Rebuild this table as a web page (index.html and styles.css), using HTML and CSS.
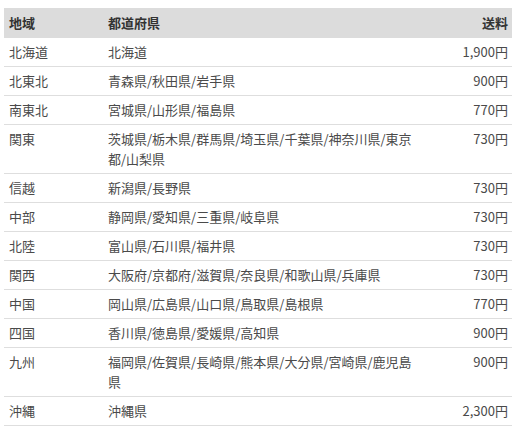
FILE: index.html
```html
<!DOCTYPE html>
<html lang="ja">
<head>
<meta charset="utf-8">
<link rel="stylesheet" href="styles.css">
</head>
<body>
<table class="fee-table">
  <colgroup>
    <col class="c-region">
    <col class="c-pref">
    <col class="c-fee">
  </colgroup>
  <thead>
    <tr><th>地域</th><th>都道府県</th><th class="num">送料</th></tr>
  </thead>
  <tbody>
    <tr><td>北海道</td><td>北海道</td><td class="num">1,900円</td></tr>
    <tr><td>北東北</td><td>青森県/秋田県/岩手県</td><td class="num">900円</td></tr>
    <tr><td>南東北</td><td>宮城県/山形県/福島県</td><td class="num">770円</td></tr>
    <tr><td>関東</td><td>茨城県/栃木県/群馬県/埼玉県/千葉県/神奈川県/東京都/山梨県</td><td class="num">730円</td></tr>
    <tr><td>信越</td><td>新潟県/長野県</td><td class="num">730円</td></tr>
    <tr><td>中部</td><td>静岡県/愛知県/三重県/岐阜県</td><td class="num">730円</td></tr>
    <tr><td>北陸</td><td>富山県/石川県/福井県</td><td class="num">730円</td></tr>
    <tr><td>関西</td><td>大阪府/京都府/滋賀県/奈良県/和歌山県/兵庫県</td><td class="num">730円</td></tr>
    <tr><td>中国</td><td>岡山県/広島県/山口県/鳥取県/島根県</td><td class="num">770円</td></tr>
    <tr><td>四国</td><td>香川県/徳島県/愛媛県/高知県</td><td class="num">900円</td></tr>
    <tr><td>九州</td><td>福岡県/佐賀県/長崎県/熊本県/大分県/宮崎県/鹿児島県</td><td class="num">900円</td></tr>
    <tr><td>沖縄</td><td>沖縄県</td><td class="num">2,300円</td></tr>
  </tbody>
</table>
</body>
</html>
```
FILE: styles.css
```css
html, body {
  background: #ffffff;
}
body {
  margin: 8px 9px 0 4px;
  font-family: "Noto Sans CJK JP", "Noto Sans", sans-serif;
  font-size: 13px;
  color: #4a4a4a;
}
.fee-table {
  width: 508px;
  border-collapse: collapse;
  table-layout: fixed;
}
.c-region { width: 99px; }
.c-pref { width: 315px; }
.c-fee { width: 94px; }
.fee-table th {
  background: #dcdcdc;
  color: #333333;
  font-weight: bold;
  text-align: left;
  line-height: 20px;
  padding: 5px 5px;
}
.fee-table td {
  line-height: 20px;
  padding: 4px 5px;
  border-bottom: 1px solid #dedede;
  vertical-align: top;
}
.fee-table .num {
  text-align: right;
  padding-right: 4px;
}
```
